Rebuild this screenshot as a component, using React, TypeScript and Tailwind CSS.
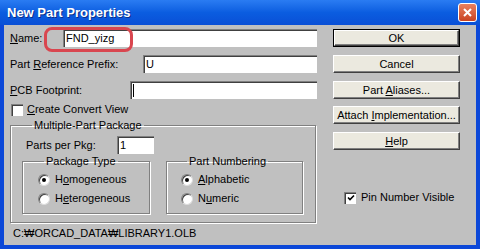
import type { ReactNode } from "react";

const ui = "font-['Liberation_Sans',Arial,sans-serif] text-[11px] leading-[13px] text-black";

function Field({ value, caret = false, className = "" }: { value?: string; caret?: boolean; className?: string }) {
  return (
    <div
      className={`flex h-[18px] items-center border-t border-l border-[#808080] border-r-[#e0e0e0] border-b-[#e0e0e0] bg-white pl-[2px] shadow-[inset_1px_1px_0_#404040] ${className}`}
    >
      {value}
      {caret && <span className="h-[13px] w-px bg-black" />}
    </div>
  );
}

function Btn({ children, primary = false }: { children: ReactNode; primary?: boolean }) {
  return (
    <div className={primary ? "h-[18px] w-[127px] border border-black" : "h-[18px] w-[127px]"}>
      <div className="flex h-full items-center justify-center border border-white border-r-[#404040] border-b-[#404040] bg-[#ebe9df] shadow-[inset_-1px_-1px_0_#808080]">
        {children}
      </div>
    </div>
  );
}

function Check({ checked = false }: { checked?: boolean }) {
  return (
    <span className="flex h-[12px] w-[12px] shrink-0 items-center justify-center border-t border-l border-[#808080] border-r-white border-b-white bg-white shadow-[inset_1px_1px_0_#404040]">
      {checked && (
        <svg width="8" height="8" viewBox="0 0 8 8">
          <path d="M1 3.5 L3 5.5 L7 1.5" stroke="#000" strokeWidth="1.6" fill="none" />
        </svg>
      )}
    </span>
  );
}

function Radio({ on = false, label }: { on?: boolean; label: ReactNode }) {
  return (
    <div className="flex items-center gap-[5px]">
      <span className="flex h-[12px] w-[12px] items-center justify-center rounded-full border border-[#808080] border-r-[#dcdcdc] border-b-[#dcdcdc] bg-white shadow-[inset_1px_1px_0_#404040]">
        {on && <span className="h-[4px] w-[4px] rounded-full bg-black" />}
      </span>
      <span>{label}</span>
    </div>
  );
}

function Group({ title, className = "", children }: { title: string; className?: string; children: ReactNode }) {
  return (
    <fieldset className={`border border-[#808080] shadow-[1px_1px_0_#ffffff,inset_1px_1px_0_#ffffff] ${className}`}>
      <legend className="ml-[6px] px-[2px]">{title}</legend>
      {children}
    </fieldset>
  );
}

export default function App() {
  return (
    <div className={`relative flex h-[249px] w-[480px] flex-col bg-[#0b47d8] ${ui}`}>
      {/* title bar */}
      <div className="flex h-[25px] items-center justify-between bg-gradient-to-b from-[#2a7cf2] via-[#0b5de0] to-[#0a4fd6] pl-[7px] pr-[3px]">
        <span className="text-[13px] font-bold text-white [text-shadow:1px_1px_0_#0a2f8a]">New Part Properties</span>
        <span className="flex h-[19px] w-[19px] items-center justify-center rounded-[3px] border border-white bg-gradient-to-b from-[#e8805e] to-[#c9421f]">
          <svg width="11" height="11" viewBox="0 0 11 11">
            <path d="M2 2 L9 9 M9 2 L2 9" stroke="#fff" strokeWidth="2" />
          </svg>
        </span>
      </div>

      {/* dialog body */}
      <div className="mx-[4px] mb-[4px] flex flex-1 flex-col bg-[#c0c0c0] pl-[6px] pt-[4px]">
        <div className="flex gap-[16px]">
          <div className="flex w-[307px] flex-col">
            <div className="flex items-center">
              <span className="w-[53px]">
                <u>N</u>ame:
              </span>
              <Field value="FND_yizg" className="flex-1" />
            </div>
            <div className="mt-[8px] flex items-center">
              <span className="w-[133px]">
                Part <u>R</u>eference Prefix:
              </span>
              <Field value="U" className="flex-1" />
            </div>
            <div className="mt-[8px] flex items-center">
              <span className="w-[120px]">
                <u>P</u>CB Footprint:
              </span>
              <Field caret className="flex-1" />
            </div>
            <div className="ml-[1px] mt-[4px] flex items-center gap-[4px]">
              <Check />
              <span>
                <u>C</u>reate Convert View
              </span>
            </div>
            <Group title="Multiple-Part Package" className="mt-[3px] w-[306px] pb-[8px] pl-[15px]">
              <div className="mt-[4px] flex items-center">
                <span className="w-[91px]">
                  Parts per Pk<u>g</u>:
                </span>
                <Field value="1" className="h-[16px] w-[37px]" />
              </div>
              <div className="mt-[1px] flex">
                <Group title="Package Type" className="-ml-[4px] h-[59px] w-[128px] pl-[15px] pt-[5px]">
                  <div className="flex flex-col gap-[6px]">
                    <Radio on label={<>H<u>o</u>mogeneous</>} />
                    <Radio label={<>H<u>e</u>terogeneous</>} />
                  </div>
                </Group>
                <Group title="Part Numbering" className="ml-[16px] h-[59px] w-[137px] pl-[14px] pt-[5px]">
                  <div className="flex flex-col gap-[6px]">
                    <Radio on label={<><u>A</u>lphabetic</>} />
                    <Radio label={<>N<u>u</u>meric</>} />
                  </div>
                </Group>
              </div>
            </Group>
          </div>

          <div className="flex w-[127px] flex-col">
            <Btn primary>OK</Btn>
            <div className="mt-[8px]">
              <Btn>Cancel</Btn>
            </div>
            <div className="mt-[8px]">
              <Btn>
                <span>
                  Part <u>A</u>liases...
                </span>
              </Btn>
            </div>
            <div className="mt-[7px]">
              <Btn>
                <span>
                  Attach <u>I</u>mplementation...
                </span>
              </Btn>
            </div>
            <div className="mt-[8px]">
              <Btn>
                <span>
                  <u>H</u>elp
                </span>
              </Btn>
            </div>
            <div className="ml-[11px] mt-[41px] flex items-center gap-[5px]">
              <Check checked />
              <span>Pin Number Visible</span>
            </div>
          </div>
        </div>
        <div className="ml-[3px] mt-[4px]">C:₩ORCAD_DATA₩LIBRARY1.OLB</div>
      </div>

      {/* red annotation around the name value */}
      <div className="absolute left-[44px] top-[27px] h-[25px] w-[89px] rounded-[8px] border-[3px] border-[#d9464f]" />
    </div>
  );
}
